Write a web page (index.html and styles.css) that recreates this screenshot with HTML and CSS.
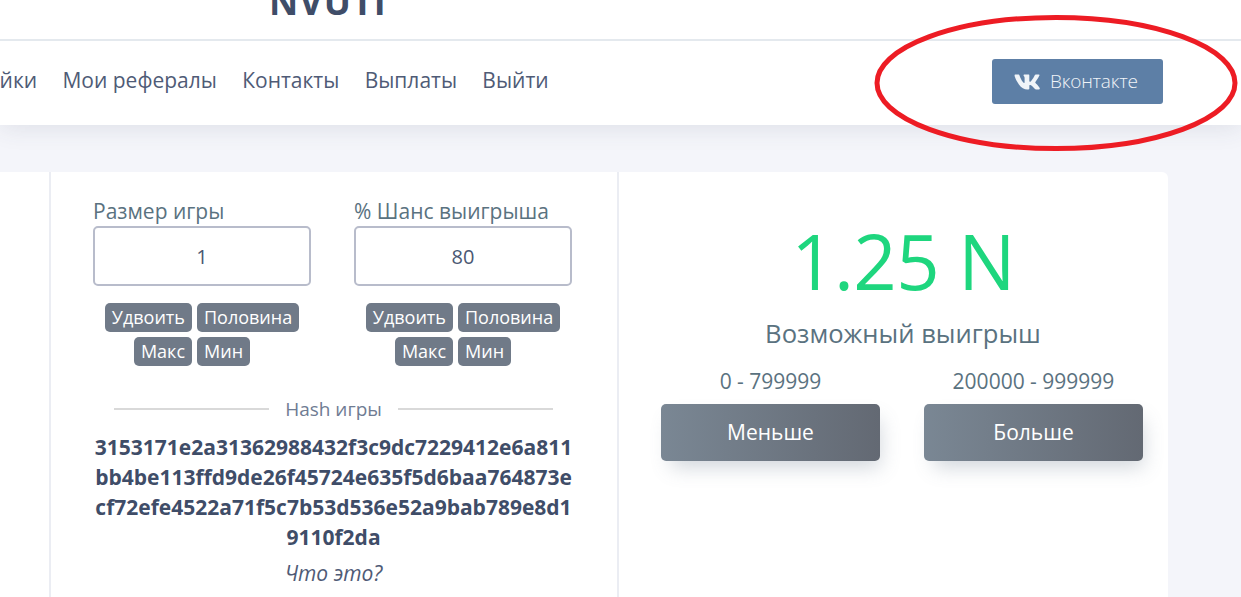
FILE: index.html
```html
<!DOCTYPE html>
<html lang="ru">
<head>
<meta charset="utf-8">
<title>NVUTI</title>
<link rel="stylesheet" href="styles.css">
</head>
<body>
<div class="page">
  <header class="top"><div class="logo">NVUTI</div></header>
  <nav class="nav">
    <ul class="menu">
      <li>Настройки</li>
      <li>Мои рефералы</li>
      <li>Контакты</li>
      <li>Выплаты</li>
      <li>Выйти</li>
    </ul>
    <a class="vk" href="#">
      <svg class="vk-icon" viewBox="0 0 576 512" aria-hidden="true"><path d="M545 117.7c3.7-12.5 0-21.7-17.8-21.7h-58.9c-15 0-21.9 7.9-25.6 16.7 0 0-31.8 73.4-76.8 121-14.6 14.6-21.1 19.2-29.1 19.2-4 0-10.1-4.6-10.1-17.1V117.7c0-15-4.2-21.7-16.6-21.7h-92.6c-9.4 0-15 7-15 13.5 0 14.2 21.2 17.5 23.4 57.4v86.8c0 19-3.4 22.5-10.9 22.5-20 0-68.6-73.4-97.4-157.4-5.8-16.3-11.5-22.9-26.6-22.9H32c-16.8 0-20.2 7.9-20.2 16.7 0 15.6 20 93.1 93.1 195.5C153.6 378.5 222.8 416 285.2 416c37.5 0 42.1-8.4 42.1-22.9 0-66.8-3.4-73.1 15.4-73.1 8.7 0 23.7 4.4 58.7 38.1 40 40 46.6 57.9 69 57.9h58.9c16.8 0 25.3-8.4 20.4-25-11.2-34.9-86.9-106.7-90.3-111.5-8.7-11.2-6.2-16.2 0-26.2.1-.1 72-101.3 79.4-135.6z"/></svg>
      <span class="vk-text">Вконтакте</span>
    </a>
  </nav>
  <main class="card">
    <div class="col-side"></div>
    <section class="col-game">
      <div class="fields">
        <div class="field">
          <div class="field-label">Размер игры</div>
          <div class="field-input">1</div>
          <div class="chips"><span class="chip">Удвоить</span><span class="chip">Половина</span></div>
          <div class="chips chips-low"><span class="chip">Макс</span><span class="chip">Мин</span></div>
        </div>
        <div class="field">
          <div class="field-label">% Шанс выигрыша</div>
          <div class="field-input">80</div>
          <div class="chips"><span class="chip">Удвоить</span><span class="chip">Половина</span></div>
          <div class="chips chips-low"><span class="chip">Макс</span><span class="chip">Мин</span></div>
        </div>
      </div>
      <div class="divider"><span>Hash игры</span></div>
      <div class="hash">3153171e2a31362988432f3c9dc7229412e6a811bb4be113ffd9de26f45724e635f5d6baa764873ecf72efe4522a71f5c7b53d536e52a9bab789e8d19110f2da</div>
      <div class="what">Что это?</div>
    </section>
    <section class="col-play">
      <div class="amount">1.25 N</div>
      <div class="amount-label">Возможный выигрыш</div>
      <div class="bets">
        <div class="bet"><div class="range">0 - 799999</div><button class="bet-btn">Меньше</button></div>
        <div class="bet"><div class="range">200000 - 999999</div><button class="bet-btn">Больше</button></div>
      </div>
    </section>
  </main>
  <svg class="circle" viewBox="0 0 370 144" aria-hidden="true"><ellipse cx="182" cy="69" rx="179" ry="65.5"/></svg>
</div>
</body>
</html>
```
FILE: styles.css
```css
* { box-sizing: border-box; }
html, body { margin: 0; padding: 0; }
body {
  font-family: "Open Sans", "Noto Sans", sans-serif;
  background: #f4f5fa;
  color: #3f4d68;
}
.page {
  position: relative;
  width: 1241px;
  height: 597px;
  overflow: hidden;
}
.top {
  position: relative;
  z-index: 1;
  height: 39px;
  background: #fff;
  display: flex;
  align-items: flex-end;
  overflow: hidden;
  padding-left: 269px;
}
.logo {
  font-size: 36px;
  font-weight: 700;
  line-height: 36px;
  letter-spacing: 1px;
  color: #3f4d68;
  margin-bottom: 19px;
}
.nav {
  height: 86px;
  background: #fff;
  border-top: 2px solid #e4e9ee;
  box-shadow: 0 2px 24px rgba(60, 66, 90, .12);
  display: flex;
  align-items: center;
  justify-content: space-between;
  position: relative;
  padding-right: 78px;
}
.menu {
  list-style: none;
  margin: 0 0 6px -73px;
  padding: 0;
  display: flex;
  gap: 25.3px;
  font-size: 21px;
  color: #4f5b76;
}
.vk {
  width: 171px;
  height: 45px;
  margin-bottom: 3px;
  display: flex;
  align-items: center;
  padding-left: 22px;
  gap: 9px;
  background: #5d7fa6;
  border-radius: 3px;
  color: #f0f4f8;
  font-size: 19px;
  font-weight: 350;
  letter-spacing: -.2px;
  text-decoration: none;
}
.vk-icon { width: 27px; height: 24px; fill: #f0f4f8; }
.vk-text { margin-bottom: 2px; }
.card {
  margin: 47px 73px 0 -20px;
  height: 600px;
  background: #fff;
  border-radius: 6px;
  display: flex;
}
.col-side {
  width: 69px;
  flex: none;
}
.col-game {
  width: 570px;
  flex: none;
  border-left: 2px solid #ebedf3;
  border-right: 2px solid #ebedf3;
  padding: 25px 45px 0 42px;
}
.fields { display: flex; gap: 43px; }
.field { width: 218px; flex: none; }
.field-label {
  font-size: 21px;
  line-height: 29px;
  color: #5a7280;
}
.field-input {
  height: 60px;
  border: 2px solid #b8bccb;
  border-radius: 5px;
  font-size: 20px;
  display: flex;
  align-items: center;
  justify-content: center;
  color: #4a5873;
  margin-bottom: 17px;
}
.chips {
  display: flex;
  justify-content: center;
  gap: 5px;
  margin-bottom: 5px;
}
.chips-low { padding-right: 20px; }
.chip {
  height: 29px;
  padding: 0 7px;
  background: #707a88;
  border-radius: 5px;
  color: #fff;
  font-size: 18px;
  line-height: 29px;
  white-space: nowrap;
}
.divider {
  margin: 24px 19px 0 21px;
  display: flex;
  align-items: center;
  gap: 16px;
  font-size: 19px;
  line-height: 28px;
  color: #6f7c93;
}
.divider::before, .divider::after {
  content: "";
  flex: 1;
  height: 2px;
  background: #d9d9d9;
}
.hash {
  margin: 9px -1px 0 0;
  padding-left: 1px;
  font-size: 21px;
  font-weight: 700;
  line-height: 30px;
  text-align: center;
  word-break: break-all;
  color: #3f4d68;
}
.what {
  margin-top: 6px;
  padding-left: 2px;
  font-size: 21px;
  font-style: italic;
  line-height: 30px;
  text-align: center;
  color: #4f5b76;
}
.col-play {
  flex: 1;
  padding: 40px 25px 0 42px;
  display: flex;
  flex-direction: column;
  align-items: center;
}
.amount {
  font-size: 76px;
  font-weight: 372;
  letter-spacing: -.6px;
  line-height: 98px;
  padding-left: 2px;
  color: #1ed67e;
}
.amount-label {
  margin-top: 7px;
  padding-left: 2px;
  font-size: 25.6px;
  line-height: 34px;
  color: #5a7280;
}
.bets {
  margin-top: 15px;
  align-self: stretch;
  display: flex;
  justify-content: space-between;
}
.bet { width: 219px; text-align: center; }
.range {
  font-size: 21px;
  line-height: 30px;
  margin-bottom: 8px;
  color: #5a7280;
}
.bet-btn {
  display: block;
  width: 100%;
  height: 57px;
  padding: 0 0 2px;
  border: 0;
  border-radius: 5px;
  font-family: inherit;
  font-size: 21px;
  color: #fff;
  background: linear-gradient(90deg, #7a8794, #636973);
  box-shadow: 5px 11px 20px -5px rgba(100, 115, 135, .3);
}
.circle {
  position: absolute;
  z-index: 2;
  left: 874px;
  top: 14px;
  width: 370px;
  height: 144px;
  fill: none;
  stroke: #ed1c24;
  stroke-width: 5;
}
```
